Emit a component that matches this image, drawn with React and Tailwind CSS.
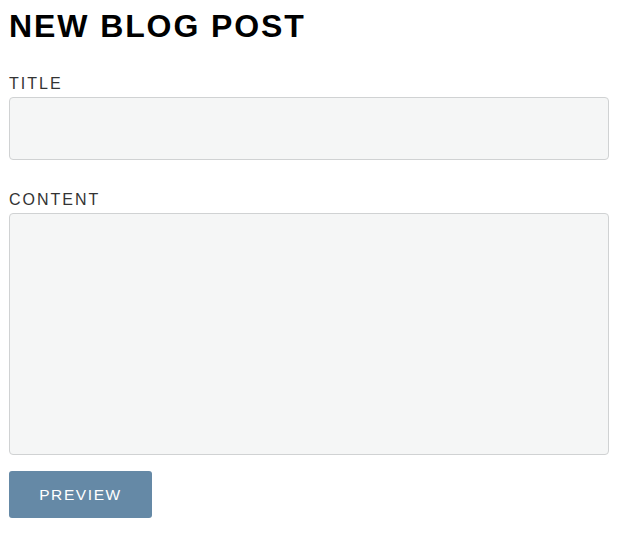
export default function App() {
  return (
    <div className="min-h-screen bg-white px-[9px] pt-[6px] font-['Liberation_Sans',Arial,sans-serif]">
      <h1 className="text-[32px] font-bold leading-[40px] tracking-[1.9px] text-black">NEW BLOG POST</h1>

      <form className="mt-[29px]" onSubmit={(e) => e.preventDefault()}>
        <label className="block text-[16px] leading-[18px] tracking-[2px] text-[#333]">TITLE</label>
        <input
          type="text"
          className="mt-[4px] block h-[63px] w-[600px] rounded-[4px] border border-[#d0d2d3] bg-[#f5f6f6]"
        />

        <label className="mt-[31px] block text-[16px] leading-[18px] tracking-[2px] text-[#333]">CONTENT</label>
        <textarea className="mt-[4px] block h-[242px] w-[600px] resize-none rounded-[4px] border border-[#d0d2d3] bg-[#f5f6f6]" />

        <button
          type="button"
          className="mt-[16px] h-[47px] w-[143px] rounded-[3px] bg-[#6589a6] text-[15.5px] tracking-[1.6px] text-white"
        >
          PREVIEW
        </button>
      </form>
    </div>
  );
}
